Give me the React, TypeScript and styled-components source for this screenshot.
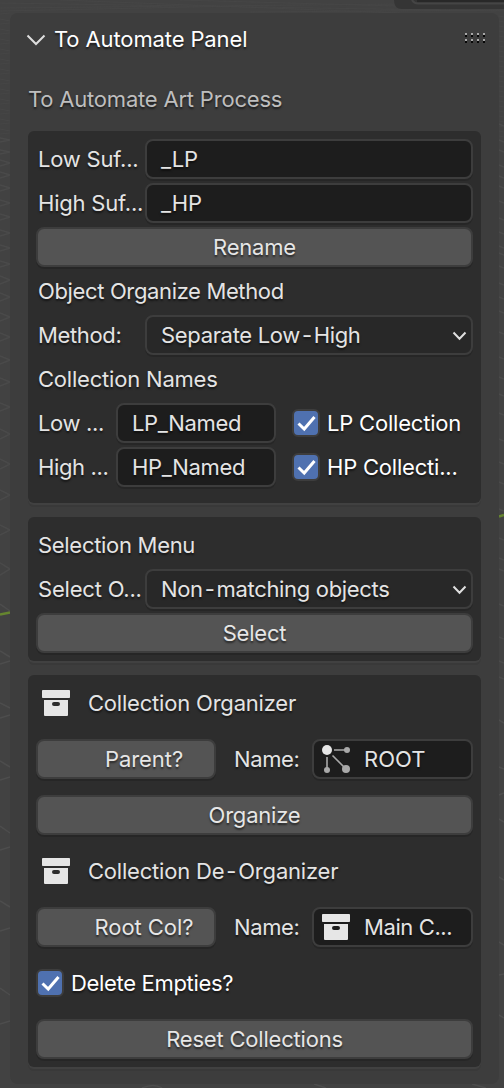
import React from 'react';
import styled, { createGlobalStyle } from 'styled-components';

const GlobalStyle = createGlobalStyle`
  * { box-sizing: border-box; }
  body {
    margin: 0;
    background: #424242;
    font-family: Inter, "Noto Sans", sans-serif;
    font-size: 22px;
    letter-spacing: -0.2px;
    color: #e4e4e4;
    overflow: hidden;
  }
`;

const Viewport = styled.div`
  position: relative;
  width: 504px;
  height: 1088px;
  padding: 13px 5px 4px 10px;
  overflow: hidden;
`;

const Grid = styled.svg`
  position: absolute;
  inset: 0;
`;

const Panel = styled.main`
  position: relative;
  height: 1071px;
  padding: 0 18px;
  border-radius: 8px;
  background: #3d3d3d;
  text-shadow: 0 2px 2px rgba(0, 0, 0, 0.55);
  white-space: nowrap;
`;

const Header = styled.header`
  display: flex;
  align-items: center;
  height: 52px;
  margin: 0 -4px 0 -2px;
  color: #fff;
`;

const Title = styled.h1`
  flex: 1;
  margin: 0 0 0 8px;
  font-size: inherit;
  font-weight: 400;
  letter-spacing: -0.12px;
  line-height: 40px;
`;

const HeaderChevron = styled.svg`
  margin-top: 2px;
`;

const GripDots = styled.svg`
  margin-bottom: 2px;
`;

const Subtitle = styled.div`
  height: 66px;
  padding-top: 14px;
  line-height: 40px;
  color: #bebebe;
`;

const Box = styled.section<{ $gap?: number; $bottom?: number }>`
  display: flex;
  flex-direction: column;
  gap: ${(p) => p.$gap ?? 4}px;
  margin-bottom: 14px;
  padding: 8px 8px ${(p) => p.$bottom ?? 8}px;
  border-radius: 6px;
  background: #2d2d2d;
  box-shadow: 0 2px 0 #414141, 0 4px 0 #393939;
`;

const Row = styled.div`
  display: flex;
  align-items: center;
  height: 40px;
`;

const Label = styled.span<{ $width?: number; $indent?: number; $track?: number }>`
  flex: none;
  width: ${(p) => (p.$width ? `${p.$width}px` : 'auto')};
  padding-left: ${(p) => p.$indent ?? 2}px;
  letter-spacing: ${(p) => p.$track ?? -0.2}px;
  line-height: 40px;
`;

const RowIcon = styled.span`
  display: flex;
  flex: none;
  width: 34px;
  padding-left: 6px;
`;

const Field = styled.div<{ $width?: number; $pad?: number; $menu?: boolean }>`
  display: flex;
  align-items: center;
  flex: ${(p) => (p.$width ? 'none' : '1')};
  width: ${(p) => (p.$width ? `${p.$width}px` : 'auto')};
  height: 40px;
  padding: 0 ${(p) => (p.$menu ? 4 : 0)}px 0 ${(p) => p.$pad ?? 14}px;
  border: 2px solid #3d3d3d;
  border-radius: 8px;
  background: ${(p) => (p.$menu ? '#282828' : '#1d1d1d')};
  box-shadow: 0 2px 0 rgba(0, 0, 0, 0.14);
  letter-spacing: ${(p) => (p.$width || p.$menu ? -0.33 : -0.1)}px;
`;

const Value = styled.span`
  flex: 1;
`;

const IconValue = styled.span<{ $track?: number }>`
  margin-left: 14px;
  letter-spacing: ${(p) => p.$track ?? 0}px;
`;

const Button = styled.button<{ $width?: number; $toggle?: boolean }>`
  flex: none;
  width: ${(p) => (p.$width ? `${p.$width}px` : '100%')};
  height: 40px;
  margin: 0;
  padding: 0 0 0 ${(p) => (p.$toggle ? 36 : 0)}px;
  border: 2px solid #3d3d3d;
  border-radius: 8px;
  background: #545454;
  box-shadow: 0 2px 0 rgba(0, 0, 0, 0.14);
  color: #e6e6e6;
  font: inherit;
  letter-spacing: ${(p) => (p.$toggle ? -0.05 : -0.2)}px;
  text-shadow: inherit;
`;

const Check = styled.label<{ $indent?: number; $track?: number }>`
  display: flex;
  align-items: center;
  gap: 7px;
  margin-left: ${(p) => p.$indent ?? 0}px;
  color: #fff;
  letter-spacing: ${(p) => p.$track ?? -0.2}px;
`;

const Tick = styled.span`
  display: grid;
  place-items: center;
  width: 28px;
  height: 28px;
  border: 2px solid #3d3d3d;
  border-radius: 6px;
  background: #4f71b0;
`;

const Dash = styled.span`
  margin: 0 2px;
`;

const CollectionIcon = () => (
  <svg width="28" height="28" viewBox="0 0 28 28" fill="#e6e6e6">
    <rect x="0" y="1" width="28" height="8" rx="0.8" />
    <path
      fillRule="evenodd"
      d="M2 11h24v15q0 1-1 1H3q-1 0-1-1zM12 13q-2 0-2 2t2 2h4q2 0 2-2t-2-2z"
    />
  </svg>
);

const EmptyIcon = () => (
  <svg width="28" height="28" viewBox="0 0 28 28" fill="#a9a9a9">
    <path d="M12 5h13M5 12v13M10.500 10.500L24 24" fill="none" stroke="#a9a9a9" strokeWidth="1.6" />
    <circle cx="25" cy="5" r="3" />
    <circle cx="5" cy="25" r="3" />
    <circle cx="24" cy="24" r="4" />
    <circle cx="5" cy="5" r="5" fill="#e6e6e6" />
  </svg>
);

const MenuArrow = () => (
  <svg width="15" height="12" viewBox="0 0 15 12" fill="none" stroke="#e0e0e0" strokeWidth="2">
    <path d="M1.500 3.500l6 6.200L13.500 3.500" />
  </svg>
);

const Checkbox = ({ text, indent, track }: { text: string; indent?: number; track?: number }) => (
  <Check $indent={indent} $track={track}>
    <Tick>
      <svg width="24" height="24" viewBox="0 0 24 24" fill="none" stroke="#fff" strokeWidth="3">
        <path d="M4.500 12.500l5.700 5.500L20.500 6" />
      </svg>
    </Tick>
    {text}
  </Check>
);

const Grip = () => (
  <GripDots width="20" height="10" viewBox="0 0 20 10" shapeRendering="crispEdges">
    {[0, 6, 12, 18].map((x) =>
      [0, 6].map((y) => (
        <g key={`${x}-${y}`}>
          <rect x={x} y={y} width="2" height="2" fill="#a8a8a8" />
          <rect x={x} y={y + 2} width="2" height="2" fill="#060606" />
        </g>
      )),
    )}
  </GripDots>
);

const leftCrossings = [
  [140, 2], [152, 2], [163, 3], [175, 3], [188, 3], [203, 3], [217, 3], [233, 3], [248, 3],
  [264, 3], [280, 4], [297, 4], [317, 4], [337, 4], [360, 4], [382, 4], [407, 4], [434, 5],
  [464, 5], [495, 5], [530, 5], [569, 6],
];
const rightMarks = [
  124, 140, 150, 165, 176, 186, 201, 218, 232, 246, 253, 266, 283, 297, 311, 332, 357, 377, 394,
  413, 439, 462, 482, 509, 538, 558, 569, 604, 637, 661, 677,
];

const ViewportGrid = () => (
  <Grid width="504" height="1088" viewBox="0 0 504 1088" fill="none" stroke="#4d4d4d" strokeWidth="1.500">
    <g strokeWidth="1" stroke="#464646">
      {Array.from({ length: 25 }, (_, i) => (
        <path key={i} d={`M0 ${14 + i * 5}l10 ${i % 2 ? 2 : -1}M499 ${16 + i * 5}l5 1`} />
      ))}
      <path d="M0 8L504 3M0 3L504 11M60 0L400 13M180 0L504 9M0 11L240 6M250 12L504 10" />
    </g>
    {leftCrossings.map(([y, s]) => (
      <path key={y} d={`M0 ${y - s}L10 ${y}L0 ${y + s}`} stroke="#4a4a4a" />
    ))}
    {rightMarks.map((y) => (
      <path key={y} d={`M499 ${y}l5 2`} stroke="#4b4b4b" />
    ))}
    <path d="M0 604l10 7M0 651l10 6M0 664l10-3M0 703l10 5M0 718l10-3M0 761l10 6M0 780l10-3M0 826l10 7M0 850l10-3M0 901l10 6M0 931l10-3M0 988l10 7M0 1024l10-3" />
    <path d="M499 720l5 3M499 767l5 2M499 795l5-2M499 819l5 3M499 877l5 3M499 942l5 3M499 975l5-1M499 1015l5 3M142 1088q12-5 20 0M314 1084l12 4M472 1084l14 4" />
    <path d="M0 614.500l10-2M499 516.500l5-1.500" stroke="#65852f" strokeWidth="2.500" />
    <path d="M394 0h110v9H402q-8 0-8-9z" fill="#353535" stroke="none" />
    <path d="M412 0q2 3.500 6 3.500h86" stroke="#454545" strokeWidth="2" />
    <path d="M417 1h87" stroke="#282828" strokeWidth="2" />
  </Grid>
);

export default function App() {
  return (
    <>
      <GlobalStyle />
      <Viewport>
        <ViewportGrid />
        <Panel>
          <Header>
            <HeaderChevron width="20" height="14" viewBox="0 0 20 14" fill="none" stroke="#dedede" strokeWidth="2">
              <path d="M1.500 2.500L10 11l8.500-8.500" />
            </HeaderChevron>
            <Title>To Automate Panel</Title>
            <Grip />
          </Header>
          <Subtitle>To Automate Art Process</Subtitle>

          <Box $bottom={16}>
            <Row>
              <Label $width={109}>Low Suf...</Label>
              <Field>_LP</Field>
            </Row>
            <Row>
              <Label $width={109}>High Suf...</Label>
              <Field>_HP</Field>
            </Row>
            <Button>Rename</Button>
            <Row>
              <Label $track={-0.36}>Object Organize Method</Label>
            </Row>
            <Row>
              <Label $width={109} $track={-0.36}>Method:</Label>
              <Field $menu>
                <Value>Separate Low<Dash>-</Dash>High</Value>
                <MenuArrow />
              </Field>
            </Row>
            <Row>
              <Label>Collection Names</Label>
            </Row>
            <Row>
              <Label $width={80} $track={-0.36}>Low ...</Label>
              <Field $width={160}>LP_Named</Field>
              <Checkbox text="LP Collection" indent={16} />
            </Row>
            <Row>
              <Label $width={80} $track={-0.36}>High ...</Label>
              <Field $width={160}>HP_Named</Field>
              <Checkbox text="HP Collecti..." indent={16} />
            </Row>
          </Box>

          <Box>
            <Row>
              <Label $track={-0.3}>Selection Menu</Label>
            </Row>
            <Row>
              <Label $width={109}>Select O...</Label>
              <Field $menu>
                <Value>Non<Dash>-</Dash>matching objects</Value>
                <MenuArrow />
              </Field>
            </Row>
            <Button>Select</Button>
          </Box>

          <Box $gap={16}>
            <Row>
              <RowIcon><CollectionIcon /></RowIcon>
              <Label $indent={18}>Collection Organizer</Label>
            </Row>
            <Row>
              <Button $width={180} $toggle>Parent?</Button>
              <Label $width={96} $indent={18} $track={-0.36}>Name:</Label>
              <Field $pad={8}>
                <EmptyIcon />
                <IconValue>ROOT</IconValue>
              </Field>
            </Row>
            <Button>Organize</Button>
            <Row>
              <RowIcon><CollectionIcon /></RowIcon>
              <Label $indent={18}>Collection De<Dash>-</Dash>Organizer</Label>
            </Row>
            <Row>
              <Button $width={180} $toggle>Root Col?</Button>
              <Label $width={96} $indent={18} $track={-0.36}>Name:</Label>
              <Field $pad={8}>
                <CollectionIcon />
                <IconValue $track={-0.4}>Main C...</IconValue>
              </Field>
            </Row>
            <Row>
              <Checkbox text="Delete Empties?" track={-0.33} />
            </Row>
            <Button>Reset Collections</Button>
          </Box>
        </Panel>
      </Viewport>
    </>
  );
}
